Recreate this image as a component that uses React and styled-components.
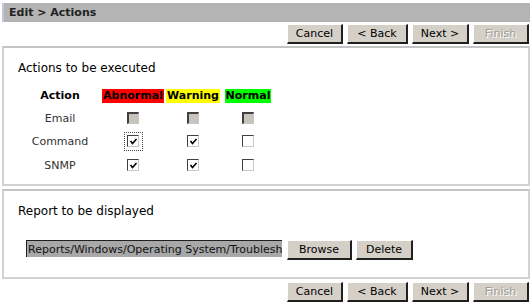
import styled, { createGlobalStyle } from "styled-components";

const Global = createGlobalStyle`
  body {
    margin: 0;
    background: #fff;
    font-family: "DejaVu Sans", Verdana, sans-serif;
    font-size: 11px;
    color: #000;
  }
`;

const Page = styled.div`
  width: 532px;
  height: 304px;
  padding: 3px 2px 0 2px;
  box-sizing: border-box;
  overflow: hidden;
`;

const Header = styled.div`
  height: 19px;
  background: #b4b4b4;
  border-left: 2px solid #c4c4dc;
  display: flex;
  align-items: center;
  padding-left: 5px;
  font-weight: bold;
  font-size: 11px;
  color: #222;
`;

const ButtonBar = styled.div`
  display: flex;
  justify-content: flex-end;
  gap: 4px;
  padding-right: 1px;
  margin: ${(p) => p.$margin || "2px 0"};
`;

const Button = styled.button`
  height: 20px;
  width: ${(p) => p.$w}px;
  padding: 0;
  background: #d4d0c8;
  border: none;
  border-top: 1px solid #fff;
  border-left: 1px solid #fff;
  border-right: 2px solid #202020;
  border-bottom: 2px solid #202020;
  font-family: "DejaVu Sans", Verdana, sans-serif;
  font-size: 11px;
  color: ${(p) => (p.disabled ? "#a09c94" : "#000")};
  text-shadow: ${(p) => (p.disabled ? "1px 1px 0 #fff" : "none")};
`;

const Panel = styled.div`
  height: ${(p) => p.$h}px;
  border: 2px solid #d2d2d2;
  border-top-color: #c4c4c4;
  box-sizing: border-box;
  padding: 13px 0 0 14px;
  margin-bottom: 3px;
`;

const PanelTitle = styled.div`
  font-size: 12px;
  line-height: 14px;
  color: #000;
  margin-bottom: ${(p) => p.$gap}px;
`;

const Grid = styled.div`
  display: grid;
  grid-template-columns: 73px 60px 60px 50px;
  grid-template-rows: 22px 22px 24px 24px;
  margin-left: 12px;
  align-items: center;
  justify-items: center;
  & > *:nth-child(4n + 1) {
    margin-right: 13px;
  }
`;

const ColHead = styled.span`
  font-weight: bold;
  padding: 0 1px;
  line-height: 14px;
  background: ${(p) => p.$bg || "transparent"};
`;

const RowLabel = styled.span`
  color: #333;
`;

const Focus = styled.span`
  display: inline-flex;
  align-items: center;
  justify-content: center;
  width: 17px;
  height: 17px;
  border: 1px dotted ${(p) => (p.$on ? "#444" : "transparent")};
`;

const Box = styled.span`
  display: inline-flex;
  align-items: center;
  justify-content: center;
  width: 12px;
  height: 12px;
  box-sizing: border-box;
  border-top: ${(p) => (p.$disabled ? "2px solid #404040" : "1px solid #404040")};
  border-left: ${(p) => (p.$disabled ? "2px solid #404040" : "1px solid #404040")};
  border-right: 1px solid #c8c8c8;
  border-bottom: 1px solid #c8c8c8;
  background: ${(p) => (p.$disabled ? "#c8c4bc" : "#fff")};
`;

function Check({ checked, disabled, focus }) {
  return (
    <Focus $on={focus}>
      <Box $disabled={disabled}>
        {checked && (
          <svg width="9" height="9" viewBox="0 0 9 9">
            <polyline points="1.5,4 3.5,6.5 7.5,2" fill="none" stroke="#000" strokeWidth="1.6" />
          </svg>
        )}
      </Box>
    </Focus>
  );
}

const FileRow = styled.div`
  display: flex;
  align-items: flex-start;
  gap: 5px;
  margin-left: 8px;
  & > button + button {
    margin-left: -1px;
  }
`;

const PathInput = styled.input`
  width: 256px;
  height: 17px;
  box-sizing: border-box;
  margin: 0;
  background: #a8a8a8;
  border: none;
  border-top: 1px solid #202020;
  border-left: 1px solid #202020;
  padding: 0 0 0 1px;
  font-family: "DejaVu Sans", Verdana, sans-serif;
  font-size: 11px;
  color: #111;
  outline: none;
`;

const rows = [
  { name: "Email", values: [false, false, false], disabled: true },
  { name: "Command", values: [true, true, false], focus: 0 },
  { name: "SNMP", values: [true, true, false] },
];

function Nav({ margin }) {
  return (
    <ButtonBar $margin={margin}>
      <Button $w={56}>Cancel</Button>
      <Button $w={61}>&lt; Back</Button>
      <Button $w={57}>Next &gt;</Button>
      <Button $w={56} disabled>Finish</Button>
    </ButtonBar>
  );
}

export default function App() {
  return (
    <>
      <Global />
      <Page>
        <Header>Edit &gt; Actions</Header>
        <Nav margin="2px 0 2px" />
        <Panel $h={140}>
          <PanelTitle $gap={10}>Actions to be executed</PanelTitle>
          <Grid>
            <ColHead>Action</ColHead>
            <ColHead $bg="#ff0000">Abnormal</ColHead>
            <ColHead $bg="#ffff00">Warning</ColHead>
            <ColHead $bg="#00ff00">Normal</ColHead>
            {rows.map((r) => [
              <RowLabel key={r.name}>{r.name}</RowLabel>,
              ...r.values.map((v, i) => (
                <Check key={r.name + i} checked={v} disabled={r.disabled} focus={r.focus === i} />
              )),
            ])}
          </Grid>
        </Panel>
        <Panel $h={90}>
          <PanelTitle $gap={22}>Report to be displayed</PanelTitle>
          <FileRow>
            <PathInput readOnly value="Reports/Windows/Operating System/Troubleshooting" />
            <Button $w={65}>Browse</Button>
            <Button $w={57}>Delete</Button>
          </FileRow>
        </Panel>
        <Nav margin="0" />
      </Page>
    </>
  );
}
